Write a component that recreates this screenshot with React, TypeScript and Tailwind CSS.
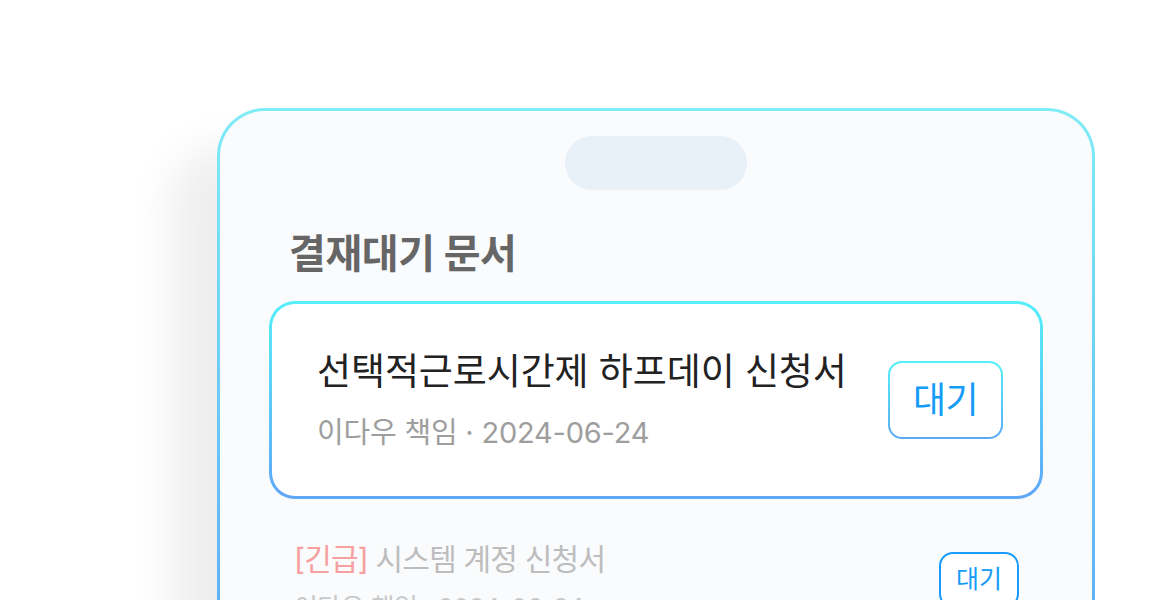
import React from "react";

const font = { fontFamily: "Inter, 'Noto Sans CJK KR', sans-serif" };

export default function App() {
  return (
    <div className="w-[1176px] h-[600px] overflow-hidden bg-white" style={font}>
      <div className="pl-[217px] pt-[108px]">
        <div className="w-[878px] h-[620px] rounded-[48px] p-[3px] bg-gradient-to-b from-[#80ecf6] to-[#5aa2f4] shadow-[-45px_40px_45px_rgba(0,0,0,0.07)]">
          <div className="h-full rounded-[45px] bg-[#f9fbfd] flex flex-col px-[49px]">
            <div className="mt-[25px] mx-auto w-[182px] h-[54px] rounded-full bg-[#e8f0f8]" />
            <h1 className="mt-[40px] pl-[20px] text-[40px] leading-[48px] font-bold text-[#666] tracking-[-0.4px]">
              결재대기 문서
            </h1>
            <div className="mt-[23px] w-[774px] h-[198px] rounded-[26px] p-[3px] bg-gradient-to-b from-[#55f0fa] to-[#5ea6f7]">
              <div className="h-full rounded-[23px] bg-white flex items-center justify-between pl-[45px] pr-[37px]">
                <div className="flex flex-col">
                  <div className="text-[37px] leading-[46px] text-[#222] tracking-[-0.1px]">
                    선택적근로시간제 하프데이 신청서
                  </div>
                  <div className="mt-[20px] text-[29px] leading-[36px] text-[#9e9e9e] tracking-[-0.2px]">
                    이다우 책임 · 2024-06-24
                  </div>
                </div>
                <div className="w-[115px] h-[78px] rounded-[14px] p-[2px] bg-gradient-to-b from-[#55f0fa] to-[#5aaaf5]">
                  <div className="h-full rounded-[12px] bg-white flex items-center justify-center text-[36px] text-[#159cf8] tracking-[-0.5px]">
                    대기
                  </div>
                </div>
              </div>
            </div>
            <div className="mt-[40px] flex items-start justify-between pl-[25px] pr-[24px]">
              <div className="flex flex-col">
                <div className="text-[30px] leading-[40px] tracking-[-0.8px]">
                  <span className="text-[#f7a0a0]">[긴급]</span>
                  <span className="text-[#bdbdbd]"> 시스템 계정 신청서</span>
                </div>
                <div className="mt-[12px] text-[26px] leading-[34px] text-[#c8c8c8] tracking-[-0.6px]">
                  이다우 책임 · 2024-06-24
                </div>
              </div>
              <div className="mt-[13px] w-[80px] h-[56px] rounded-[14px] border-2 border-[#1a9bff] bg-white flex items-center justify-center text-[25px] text-[#159cf8]">
                대기
              </div>
            </div>
          </div>
        </div>
      </div>
    </div>
  );
}
